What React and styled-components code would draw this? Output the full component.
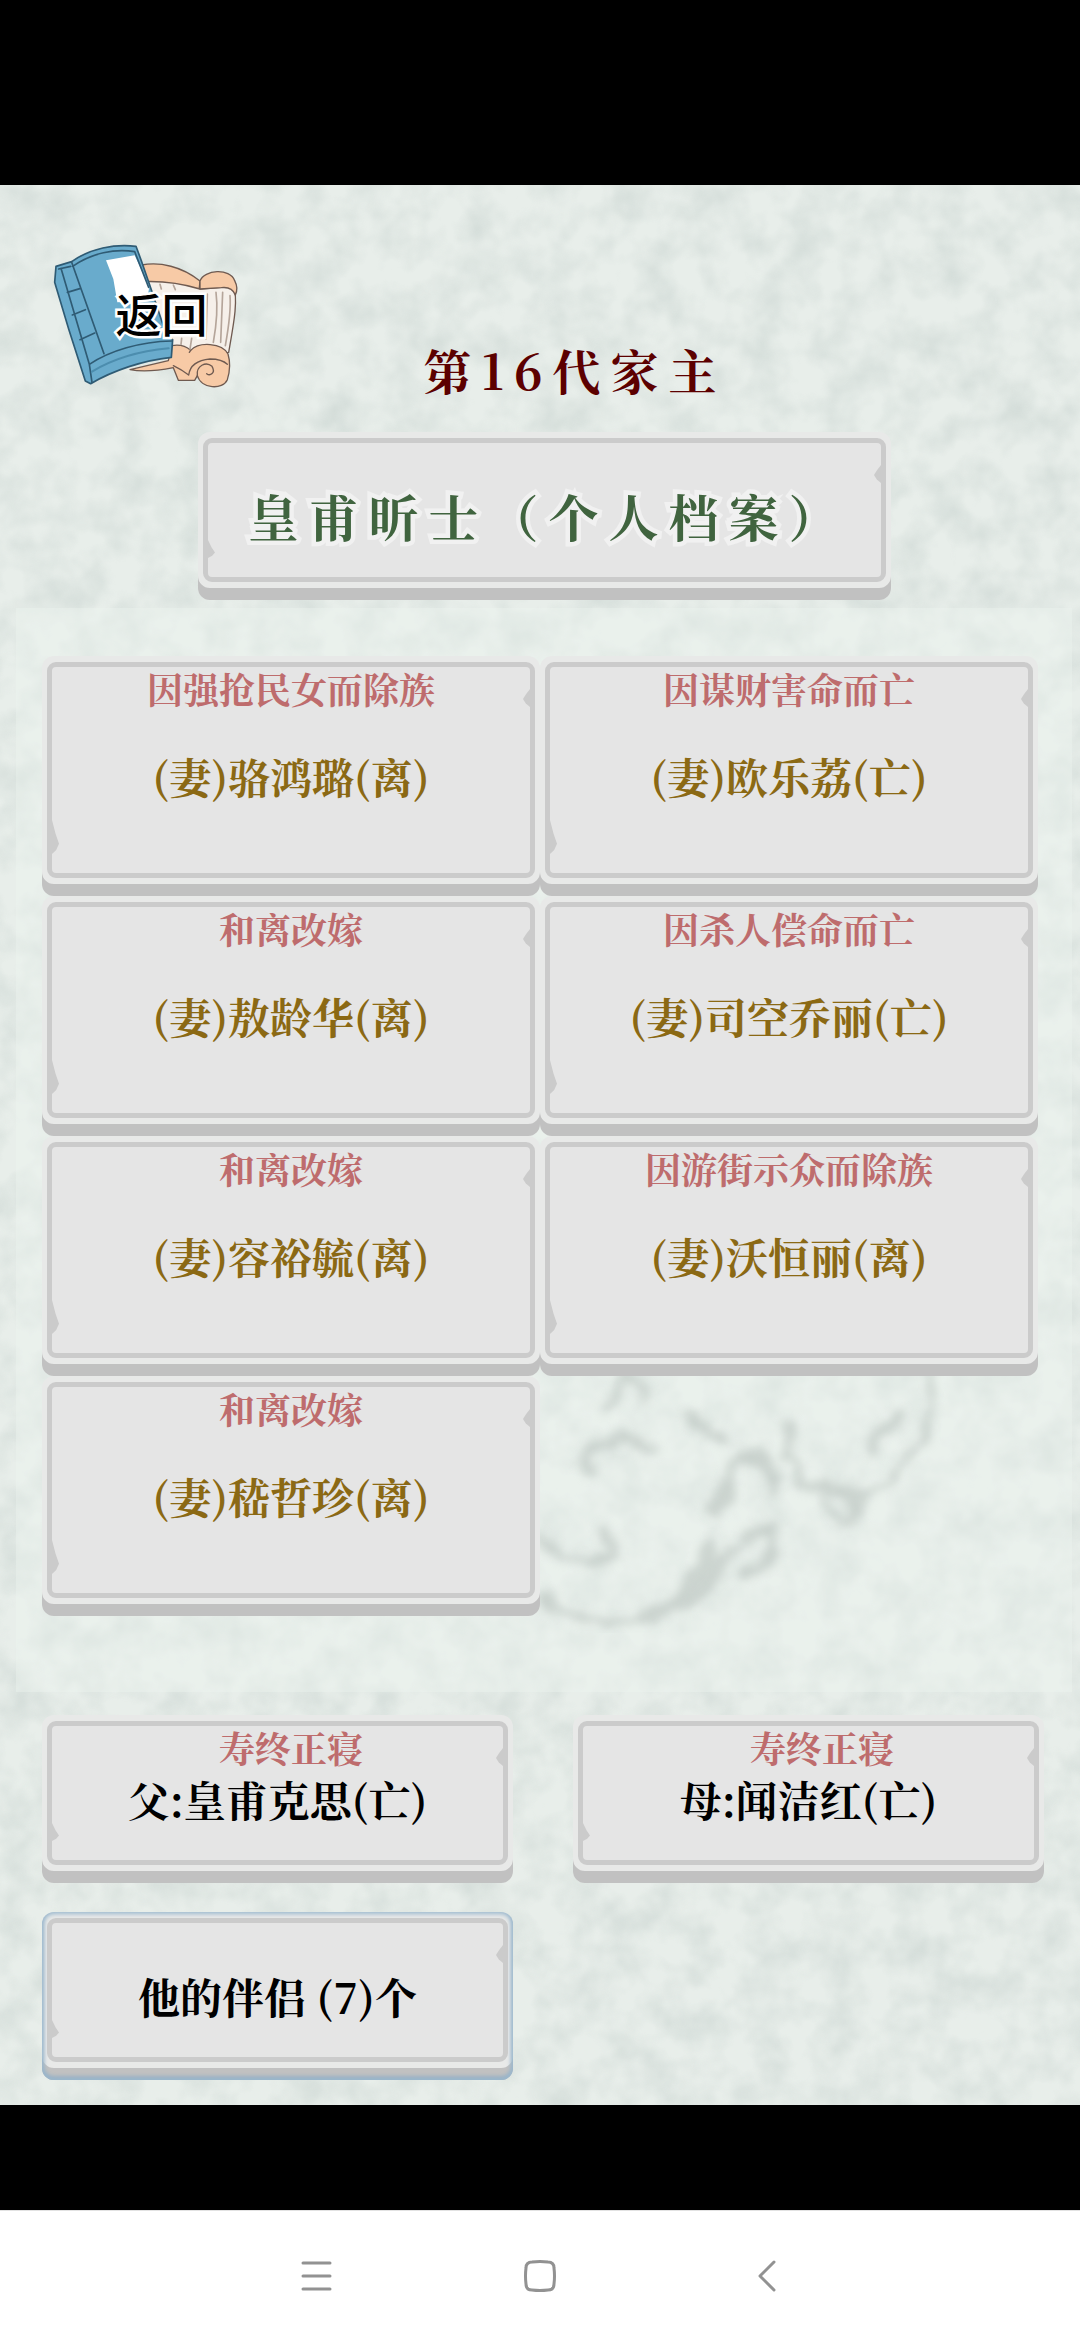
import React, { useState } from "react";
import styled, { createGlobalStyle } from "styled-components";

const GlobalStyle = createGlobalStyle`
  * {
    box-sizing: border-box;
  }
  body {
    margin: 0;
    background: #000;
    font-family: "Noto Serif CJK SC", "Source Han Serif SC", "Liberation Serif", "Noto Sans CJK SC", serif;
  }
  button {
    font-family: inherit;
    border: none;
    background: none;
    padding: 0;
    cursor: pointer;
  }
`;
const Screen = styled.div`
  display: flex;
  flex-direction: column;
  min-height: 100vh;
  background: #000;
`;
const Game = styled.main`
  position: relative;
  isolation: isolate;
  overflow: hidden;
  margin: 185px 0 105px;
  padding-bottom: 25px;
  background: #e8eeea;
`;
const Paper = styled.svg`
  position: absolute;
  inset: 0;
  width: 100%;
  height: 100%;
  z-index: -1;
`;
const Header = styled.header`
  display: flex;
  align-items: flex-end;
  padding: 52px 173px 0 50px;
`;
const BackButton = styled.button`
  display: grid;
  width: 193px;
  height: 157px;
  flex: none;
  & > * {
    grid-area: 1 / 1;
  }
`;
const BackLabel = styled.span`
  align-self: center;
  padding: 0 0 8px 30px;
  font-family: "Noto Sans CJK SC", sans-serif;
  font-size: 46px;
  line-height: 48px;
  font-weight: 500;
  color: #000;
  -webkit-text-stroke: 5px #fff;
  paint-order: stroke fill;
`;
const Generation = styled.h2`
  flex: 1;
  margin: 0;
  text-align: center;
  font-size: 48px;
  line-height: 48px;
  font-weight: 700;
  letter-spacing: 10px;
  color: #5c0000;
`;
const Plate = styled.button`
  display: flex;
  width: 100%;
  height: ${(props) => (props.$tall ? "240px" : "168px")};
  padding: 6px 5px 18px;
  border-radius: 12px;
  background: #e8e9e8;
  box-shadow: ${(props) =>
    props.$selected
      ? "inset 0 0 4px 2px #9db9ce, inset 0 -3px 4px #8fabc0, inset 0 -12px 0 #c1c1c1"
      : "inset 0 -12px 0 #c1c1c1"};
`;
const Face = styled.span`
  position: relative;
  display: grid;
  flex: 1;
  text-align: center;
  border: 5px solid #cbcbcb;
  border-radius: 9px;
  background: #e5e5e5;
  & > * {
    grid-area: 1 / 1;
  }
  /* chips in the stone edge */
  &::before,
  &::after {
    content: "";
    position: absolute;
    width: 7px;
    background: #cbcbcb;
  }
  &::before {
    right: 0;
    top: 22px;
    height: 18px;
    clip-path: polygon(100% 0, 40% 30%, 0 55%, 40% 80%, 100% 100%);
  }
  &::after {
    left: 0;
    bottom: 19px;
    height: ${(props) => (props.$tall ? "34px" : "18px")};
    clip-path: polygon(0 0, 50% 40%, 100% 70%, 60% 88%, 0 100%);
  }
`;
const Fate = styled.span`
  align-self: start;
  padding: 4px 0 0 ${(props) => (props.$shift ? "27px" : "0")};
  font-size: 36px;
  line-height: 36px;
  font-weight: 700;
  color: #be6c6d;
`;
const Name = styled.span`
  align-self: center;
  padding-top: 12px;
  font-size: 42px;
  line-height: 48px;
  font-weight: 700;
  color: ${(props) => props.$color || "#000"};
`;
const NameBoard = styled.div`
  margin: 38px 189px 8px 198px;
`;
const BoardText = styled.h1`
  align-self: center;
  margin: 0;
  padding: 10px 0 0 8px;
  font-size: 50px;
  line-height: 48px;
  font-weight: 700;
  letter-spacing: 10px;
  white-space: nowrap;
  color: #40643f;
  -webkit-text-stroke: 9px #f1f1f1;
  paint-order: stroke fill;
`;
const SpousePanel = styled.section`
  position: relative;
  isolation: isolate;
  display: grid;
  grid-template-columns: 1fr 1fr;
  margin: 0 8px 0 16px;
  padding: 48px 34px 76px 26px;
  background: rgba(238, 244, 240, 0.4);
`;
const FamilyGrid = styled.section`
  display: grid;
  grid-template-columns: 1fr 1fr;
  gap: 29px 60px;
  padding: 23px 36px 0 42px;
`;
const NavBar = styled.nav`
  display: flex;
  align-items: center;
  justify-content: center;
  gap: 192px;
  flex: 1;
  min-height: 130px;
  border-top: 1px solid #e2e2e2;
  background: #fff;
`;
const NavButton = styled.button`
  display: flex;
  svg {
    fill: none;
    stroke: #929292;
    stroke-width: 3;
    stroke-linecap: round;
    stroke-linejoin: round;
  }
`;

const spouses = [
  { fate: "因强抢民女而除族", name: "(妻)骆鸿璐(离)" },
  { fate: "因谋财害命而亡", name: "(妻)欧乐荔(亡)" },
  { fate: "和离改嫁", name: "(妻)敖龄华(离)" },
  { fate: "因杀人偿命而亡", name: "(妻)司空乔丽(亡)" },
  { fate: "和离改嫁", name: "(妻)容裕毓(离)" },
  { fate: "因游街示众而除族", name: "(妻)沃恒丽(离)" },
  { fate: "和离改嫁", name: "(妻)嵇哲珍(离)" },
];
const parents = [
  { fate: "寿终正寝", name: "父:皇甫克思(亡)" },
  { fate: "寿终正寝", name: "母:闻洁红(亡)" },
];

function PaperTexture() {
  return (
    <Paper aria-hidden="true">
      <filter id="paper" x="0" y="0" width="100%" height="100%" colorInterpolationFilters="sRGB">
        <feTurbulence type="fractalNoise" baseFrequency="0.028" numOctaves="3" seed="8" />
        <feColorMatrix values="0 0 0 0 0.8  0 0 0 0 0.84  0 0 0 0 0.825  1.5 0 0 0 -0.52" />
      </filter>
      <rect width="100%" height="100%" filter="url(#paper)" opacity="0.8" />
    </Paper>
  );
}

// faded seal printed under the spouse list
function Seal() {
  return (
    <Paper aria-hidden="true" viewBox="16 608 1056 1084" preserveAspectRatio="none">
      <filter id="soft" x="-5%" y="-5%" width="110%" height="110%" colorInterpolationFilters="sRGB">
        <feTurbulence type="fractalNoise" baseFrequency="0.04" numOctaves="2" seed="3" result="n" />
        <feDisplacementMap in="SourceGraphic" in2="n" scale="26" xChannelSelector="R" yChannelSelector="G" />
        <feGaussianBlur stdDeviation="5" />
      </filter>
      <g fill="none" stroke="#aeb8b3" strokeWidth="10" strokeLinecap="round" filter="url(#soft)" opacity="0.5">
        <path d="M540 1596c30 26 100 34 144 10 30-16 34-50 60-68 14-10 26-4 34-16" />
        <path d="M540 1536c16 24 44 34 62 22 10-8 12-20 4-28M592 1474c-6-14 0-34 20-36 18-2 16 14 42 10M610 1410c8-8 8-22 10-34 10-4 20 10 22 24" />
        <path d="M716 1512c10-6 10-22 14-36 2-18 18-26 34-18 10 8 12 18 8 30" />
        <path d="M792 1424c-14 20-10 44 16 60 26 16 66 10 86-12 20-20 36-44 40-70 2-10-4-22 0-30" />
        <path d="M824 1486c0 20 10 38 24 38 8-6 8-16 4-28M870 1456c4-20 20-24 34-42M690 1420c8 10 20 14 32 14M746 1576c16-14 26-16 30-44" />
        <path d="M680 1600c4-16 26-30 30-50" strokeWidth="20" />
      </g>
    </Paper>
  );
}

function BookIcon() {
  return (
    <svg width="193" height="157" viewBox="150 174 579 471" strokeLinejoin="round" strokeLinecap="round">
      <g stroke="#6f5a50" strokeWidth="4">
        <path d="M425 258C480 248 545 262 600 306L596 345 425 330Z" fill="#f7caa6" />
        <path d="M430 308C500 305 560 318 600 330L700 322C716 360 700 440 686 520L520 530 430 470Z" fill="#f6f0ea" />
        <path d="M600 306C612 272 690 266 704 305Q716 328 706 348 696 322 664 326L600 330Z" fill="#f7caa6" />
        <path d="M390 572C430 580 480 574 520 566L535 604H584L592 590C604 630 668 634 682 602 692 570 690 545 684 525 666 490 596 488 572 514 556 500 536 496 515 500L505 545Z" fill="#f7caa6" />
        <path d="M520 560Q545 572 566 588 572 545 630 540 666 540 682 556M592 590C588 560 618 546 636 562 648 582 630 592 620 584M572 514 568 520" fill="none" />
      </g>
      <path d="M622 345L618 480M648 340Q656 400 640 490M668 340L662 490M690 350Q694 400 676 500M545 478L543 496M575 478L570 510M480 316L484 330M520 318L526 332" fill="none" stroke="#b5a59a" strokeWidth="5" />
      <path d="M168 262 215 248C270 208 345 194 408 202L424 245 455 335 500 470 518 482 514 535C430 544 340 574 272 614L256 606 206 450 164 310Z" fill="#69abcc" stroke="#2f5b74" strokeWidth="5" />
      <path d="M318 244 404 229 448 325 440 365 352 370 340 300Z" fill="#fff" />
      <path d="M215 250 312 524M183 268 268 556M202 340 242 328M217 408 256 392M240 482 284 462M268 556C330 515 420 488 515 486M268 556 276 610M218 262C275 222 345 208 404 218M404 218 446 325M176 270 212 262" fill="none" stroke="#2f5b74" strokeWidth="5" />
      <path d="M276 578C345 536 430 515 506 508" fill="none" stroke="#4c8dae" strokeWidth="6" />
    </svg>
  );
}

function PersonCard({ fate, name, color, tall, shift }) {
  return (
    <Plate type="button" $tall={tall}>
      <Face $tall={tall}>
        <Fate $shift={shift}>{fate}</Fate>
        <Name $color={color}>{name}</Name>
      </Face>
    </Plate>
  );
}

function App() {
  const [selected, setSelected] = useState(true);
  return (
    <Screen>
      <GlobalStyle />
      <Game>
        <PaperTexture />
        <Header>
          <BackButton type="button">
            <BookIcon />
            <BackLabel>返回</BackLabel>
          </BackButton>
          <Generation>第16代家主</Generation>
        </Header>
        <NameBoard>
          <Plate as="div">
            <Face as="div">
              <BoardText>皇甫昕士（个人档案）</BoardText>
            </Face>
          </Plate>
        </NameBoard>
        <SpousePanel>
          <Seal />
          {spouses.map((s) => (
            <PersonCard key={s.name} {...s} color="#8b6914" tall />
          ))}
        </SpousePanel>
        <FamilyGrid>
          {parents.map((p) => (
            <PersonCard key={p.name} {...p} shift />
          ))}
          <Plate type="button" $selected={selected} onClick={() => setSelected(!selected)}>
            <Face>
              <Name>他的伴侣 (7)个</Name>
            </Face>
          </Plate>
        </FamilyGrid>
      </Game>
      <NavBar>
        <NavButton type="button" aria-label="菜单">
          <svg width="32" height="32" viewBox="0 0 32 32">
            <path d="M3 3h27M3 16h27M3 29h27" />
          </svg>
        </NavButton>
        <NavButton type="button" aria-label="主页">
          <svg width="32" height="32" viewBox="0 0 32 32">
            <path d="M8 2Q16 1 24 2 30 2 30 8 31 16 30 24 30 30 24 30 16 31 8 30 2 30 2 24 1 16 2 8 2 2 8 2Z" />
          </svg>
        </NavButton>
        <NavButton type="button" aria-label="返回">
          <svg width="32" height="32" viewBox="0 0 32 32">
            <path d="M26 2 12 16 26 30" />
          </svg>
        </NavButton>
      </NavBar>
    </Screen>
  );
}

export default App;
